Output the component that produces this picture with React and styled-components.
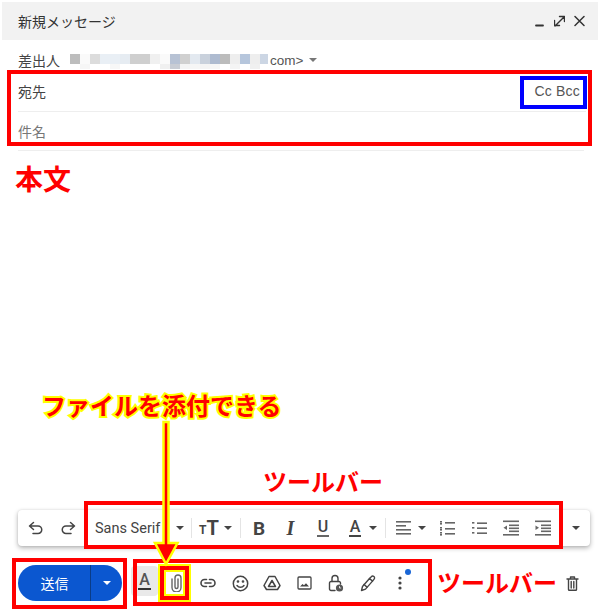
import React from "react";
import styled, { createGlobalStyle } from "styled-components";

const Global = createGlobalStyle`
  html, body { margin: 0; padding: 0; background: #fff; }
  body { font-family: "Liberation Sans", "Noto Sans CJK JP", sans-serif; }
  #root { width: 600px; height: 612px; overflow: hidden; }
`;

const Page = styled.div`
  position: relative;
  width: 600px;
  height: 612px;
  background: #fff;
  display: flex;
  flex-direction: column;
`;
const Header = styled.header`
  flex: none;
  height: 38px;
  margin: 2px 2px 0;
  padding: 0 13px 0 16px;
  background: #f2f2f2;
  display: flex;
  align-items: center;
  justify-content: space-between;
`;
const Title = styled.span`
  font-size: 14px;
  color: #333;
`;
const WindowIcons = styled.div`
  display: flex;
  align-items: center;
  gap: 9px;
`;
const FromRow = styled.div`
  flex: none;
  height: 31px;
  padding: 9px 0 0 18px;
  box-sizing: border-box;
  display: flex;
  align-items: center;
  font-size: 14px;
  color: #444;
`;
const FromLabel = styled.span`
  width: 52px;
`;
const FromMail = styled.span`
  margin-left: 2px;
  font-size: 13.5px;
  color: #555;
`;
const FromCaret = styled.span`
  margin-left: 6px;
  width: 0;
  height: 0;
  border-left: 4.5px solid transparent;
  border-right: 4.5px solid transparent;
  border-top: 4.5px solid #777;
`;
const Field = styled.div`
  flex: none;
  height: ${(p) => p.$h}px;
  margin: 0 ${(p) => p.$right}px 0 18px;
  box-sizing: border-box;
  border-bottom: 1px solid #eee;
  display: flex;
  align-items: center;
  justify-content: space-between;
  font-size: 14px;
  color: ${(p) => p.$color};
`;
const CcBcc = styled.span`
  margin-right: 6px;
  color: #555;
  letter-spacing: 0.2px;
`;
const Body = styled.div`
  flex: 1;
`;
const FormatBar = styled.div`
  flex: none;
  height: 36px;
  width: 572px;
  margin-left: 18px;
  border-radius: 4px;
  background: #fff;
  box-shadow: 0 2px 5px rgba(0, 0, 0, 0.3), 0 0 2px rgba(0, 0, 0, 0.1);
  display: flex;
  align-items: center;
`;
const Tool = styled.div`
  flex: none;
  width: ${(p) => p.$w}px;
  margin-left: ${(p) => p.$ml || 0}px;
  height: 100%;
  display: flex;
  align-items: center;
  justify-content: center;
  color: #444;
`;
const FontName = styled.div`
  flex: none;
  width: 88px;
  padding-left: 13px;
  box-sizing: border-box;
  font-family: Roboto, "Liberation Sans", sans-serif;
  font-size: 14.5px;
  color: #444;
  white-space: nowrap;
`;
const Caret = styled.span`
  width: 0;
  height: 0;
  border-left: 4px solid transparent;
  border-right: 4px solid transparent;
  border-top: 4px solid ${(p) => p.$color || "#444"};
`;
const Divider = styled.span`
  flex: none;
  width: 1px;
  height: 20px;
  margin-left: ${(p) => p.$ml}px;
  background: #e4e4e4;
`;
const SmallT = styled.span`
  font: 700 12px Roboto, sans-serif;
  align-self: flex-end;
  line-height: 15px;
`;
const BigT = styled.span`
  font: 700 20px Roboto, sans-serif;
  line-height: 20px;
`;
const TextGlyphs = styled.span`
  display: flex;
  align-items: flex-end;
  gap: 0;
  height: 20px;
`;
const Bold = styled.span`
  font: 700 19px Roboto, sans-serif;
`;
const Italic = styled.span`
  font: italic 700 20px "Liberation Serif", serif;
`;
const Under = styled.span`
  font: 500 16px/15px Roboto, sans-serif;
  padding: 0 1px 1px;
  border-bottom: 2px solid ${(p) => p.$line || "#666"};
`;
const BottomRow = styled.div`
  flex: none;
  height: 36px;
  margin-top: 19px;
  margin-bottom: 11px;
  padding: 0 12px 0 18px;
  display: flex;
  align-items: center;
`;
const Send = styled.div`
  flex: none;
  width: 104px;
  height: 36px;
  border-radius: 18px;
  background: #0b57d0;
  color: #fff;
  display: flex;
  align-items: center;
  font-size: 14px;
  overflow: hidden;
`;
const SendLabel = styled.span`
  width: 72px;
  text-align: center;
  padding-left: 1px;
  box-sizing: border-box;
`;
const SendMenu = styled.span`
  flex: 1;
  height: 100%;
  border-left: 1px solid #0a3c86;
  display: flex;
  align-items: center;
  justify-content: center;
`;
const ColorTile = styled.div`
  flex: none;
  width: 27px;
  height: 30px;
  margin: -5px 0 0 9px;
  border-radius: 4px;
  background: #e9e9e9;
  display: flex;
  align-items: center;
  justify-content: center;
  color: #555;
`;
const IconSlot = styled.div`
  position: relative;
  flex: none;
  width: 32px;
  height: 36px;
  margin-left: ${(p) => p.$ml || 0}px;
  display: flex;
  align-items: center;
  justify-content: center;
`;
const NoticeDot = styled.span`
  position: absolute;
  left: 21px;
  top: 4px;
  width: 6px;
  height: 6px;
  border-radius: 50%;
  background: #1a66d6;
`;
const Spacer = styled.div`
  flex: 1;
`;
const Frame = styled.div`
  position: absolute;
  left: ${(p) => p.$x}px;
  top: ${(p) => p.$y}px;
  width: ${(p) => p.$w}px;
  height: ${(p) => p.$h}px;
  box-sizing: border-box;
  border: ${(p) => p.$t || 4}px solid ${(p) => p.$color || "#f00"};
  pointer-events: none;
`;
const ClipFrame = styled(Frame)`
  box-shadow: 0 0 0 2px #ff0, inset 0 0 0 2px #ff0;
`;
const Note = styled.span`
  position: absolute;
  left: ${(p) => p.$x}px;
  top: ${(p) => p.$y}px;
  font-family: "Noto Sans CJK JP", sans-serif;
  font-size: ${(p) => p.$size}px;
  line-height: 1;
  font-weight: 700;
  color: #f00;
  white-space: nowrap;
  letter-spacing: ${(p) => p.$ls || 0}px;
`;
const CalloutNote = styled(Note)`
  -webkit-text-stroke: 4px #ff0;
  paint-order: stroke fill;
`;
const ArrowSvg = styled.svg`
  position: absolute;
  left: 150px;
  top: 418px;
`;

const S = ({ w, h, vw, vh, children, c = "#444", sw = 1.5, fill = "none" }) => (
  <svg
    width={w}
    height={h}
    viewBox={`0 0 ${vw || w} ${vh || h}`}
    fill={fill}
    stroke={c}
    strokeWidth={sw}
    strokeLinecap="round"
    strokeLinejoin="round"
  >
    {children}
  </svg>
);

const mosaicTop = ["#bdbdbd","#fafafa","#dcdcdc","#e9eff5","#e9eff5","#e6ecf2","#cfcfcf","#cfcfcf","#f0f0f0","#fafafa","#b7c2d4","#d0d0d0","#e3e9f0","#c9d1dc","#aebbd0","#bcbcbc","#eeeeee","#b6c6dc","#eeeeee","#ccd6e4"];
const mosaicBottom = ["#fff","#f6f6f6","#fff","#fff","#f7f7f7","#fff","#fff","#fff","#fff","#f0f0f0","#c8ccd4","#f4f4f4","#f6f6f6","#f4f4f4","#f6f6f6","#fff","#f4f4f4","#fff","#f0f0f0","#fff"];
const Mosaic = () => (
  <svg width="198" height="17">
    {mosaicTop.map((c, i) => (
      <rect key={i} x={i * 10} y="2" width="10" height="10" fill={c} />
    ))}
    {mosaicBottom.map((c, i) => (
      <rect key={i} x={i * 10} y="12" width="10" height="5" fill={c} />
    ))}
  </svg>
);

const Lines = ({ rows }) => (
  <svg width="16" height="16" fill="#666">
    {rows.map(([x, y, w], i) => (
      <rect key={i} x={x} y={y} width={w} height="1.6" />
    ))}
  </svg>
);

export default function App() {
  return (
    <Page>
      <Global />
      <Header>
        <Title>新規メッセージ</Title>
        <WindowIcons>
          <S w={10} h={12} c="#333" sw={1.8}><path d="M1 10.5h7" /></S>
          <S w={11} h={12} c="#333" sw={1.4}>
            <path d="M1 11 10 2M5.5 1.5h5v5M5.5 10.5h-5v-5" />
          </S>
          <S w={11} h={12} c="#333" sw={1.5}><path d="M1 1.5l9 9M10 1.5l-9 9" /></S>
        </WindowIcons>
      </Header>
      <FromRow>
        <FromLabel>差出人</FromLabel>
        <Mosaic />
        <FromMail>com&gt;</FromMail>
        <FromCaret />
      </FromRow>
      <Field $h={41} $right={14} $color="#444">
        <span>宛先</span>
        <CcBcc>Cc Bcc</CcBcc>
      </Field>
      <Field $h={39} $right={16} $color="#777">
        <span>件名</span>
      </Field>
      <Body />
      <FormatBar>
        <Tool $w={36}>
          <S w={16} h={14}><path d="M5.5 1.5 1.5 5l4 3.5M1.5 5H10a3.5 3.5 0 0 1 0 7.5H5" /></S>
        </Tool>
        <Tool $w={28}>
          <S w={16} h={14}><path d="M10.5 1.5l4 3.5-4 3.5M14.5 5H6a3.5 3.5 0 0 0 0 7.5h5" /></S>
        </Tool>
        <FontName>Sans Serif</FontName>
        <Tool $w={20}><Caret /></Tool>
        <Divider $ml={1} />
        <Tool $w={26} $ml={4}>
          <TextGlyphs><SmallT>T</SmallT><BigT>T</BigT></TextGlyphs>
        </Tool>
        <Tool $w={12}><Caret /></Tool>
        <Divider $ml={6} />
        <Tool $w={36}><Bold>B</Bold></Tool>
        <Tool $w={27}><Italic>I</Italic></Tool>
        <Tool $w={38}><Under>U</Under></Tool>
        <Tool $w={26}><Under $line="#444">A</Under></Tool>
        <Tool $w={10}><Caret /></Tool>
        <Divider $ml={7} />
        <Tool $w={29} $ml={3}>
          <Lines rows={[[0,1,15],[0,5,10],[0,9,15],[0,13,15]]} />
        </Tool>
        <Tool $w={8}><Caret /></Tool>
        <Tool $w={43}>
          <Lines rows={[[0,1,2],[0,3,2],[0,7,2],[0,9,2],[0,12,2],[0,14,2],[5,2,10],[5,8,10],[5,13,10]]} />
        </Tool>
        <Tool $w={21}>
          <Lines rows={[[0,2,2.4],[0,7,2.4],[0,12,2.4],[5,2.4,10],[5,7.4,10],[5,12.4,10]]} />
        </Tool>
        <Tool $w={42}>
          <svg width="16" height="16" fill="#666">
            <rect y="0.5" width="16" height="1.6" />
            <rect x="6" y="4.5" width="10" height="1.6" />
            <rect x="6" y="7.5" width="10" height="1.6" />
            <rect x="6" y="10.5" width="10" height="1.6" />
            <rect y="14" width="16" height="1.6" />
            <path d="M4 5.5v4.5L0.5 7.8z" />
          </svg>
        </Tool>
        <Tool $w={22}>
          <svg width="16" height="16" fill="#666">
            <rect y="0.5" width="16" height="1.6" />
            <rect x="6" y="4.5" width="10" height="1.6" />
            <rect x="6" y="7.5" width="10" height="1.6" />
            <rect x="6" y="10.5" width="10" height="1.6" />
            <rect y="14" width="16" height="1.6" />
            <path d="M0.5 5.5v4.5L4 7.8z" />
          </svg>
        </Tool>
        <Spacer />
        <Tool $w={28}><Caret /></Tool>
      </FormatBar>
      <BottomRow>
        <Send>
          <SendLabel>送信</SendLabel>
          <SendMenu><Caret $color="#fff" /></SendMenu>
        </Send>
        <ColorTile><Under $line="#333">A</Under></ColorTile>
        <IconSlot $ml={2}>
          <S w={13} h={18} c="#666" sw={1.4}>
            <path d="M2 5v8.5a4.5 4.5 0 0 0 9 0V4a3 3 0 0 0-6 0v9a1.5 1.5 0 0 0 3 0V5" />
          </S>
        </IconSlot>
        <IconSlot>
          <S w={16} h={10} sw={1.6}>
            <path d="M6.5 1.5H4.5a3.5 3.5 0 0 0 0 7h2M9.5 1.5h2a3.5 3.5 0 0 1 0 7h-2M5 5h6" />
          </S>
        </IconSlot>
        <IconSlot>
          <S w={17} h={17} sw={1.5}>
            <circle cx="8.5" cy="8.5" r="7.2" />
            <path d="M5 10.5c1.8 2.4 5.2 2.4 7 0" />
            <circle cx="6" cy="6.5" r="0.6" />
            <circle cx="11" cy="6.5" r="0.6" />
          </S>
        </IconSlot>
        <IconSlot>
          <S w={18} h={16} sw={1.5}>
            <path d="M6 1.5h6l5 9-2.5 4h-11L1 10.5z" />
            <path d="M9 5.5l3.5 6h-7z" />
          </S>
        </IconSlot>
        <IconSlot>
          <S w={15} h={14} sw={1.3}>
            <rect x="1" y="1" width="13" height="12" rx="1" />
            <path d="M3 10.5l2.5-2.5 1.5 1.3 2-2 3 3.2z" fill="#444" stroke="none" />
          </S>
        </IconSlot>
        <IconSlot>
          <S w={16} h={19} sw={1.4}>
            <path d="M7 16.5H3a1.5 1.5 0 0 1-1.5-1.5V9A1.5 1.5 0 0 1 3 7.5h8A1.5 1.5 0 0 1 12.5 9v1" />
            <path d="M4 7.5V4.5a3 3 0 0 1 6 0v3" />
            <circle cx="11.5" cy="14" r="3.6" fill="#555" stroke="none" />
            <path d="M11.5 12.5V14h1.3" stroke="#fff" strokeWidth="0.8" />
          </S>
        </IconSlot>
        <IconSlot>
          <S w={16} h={17} sw={1.4}>
            <path d="M1.5 15.5l1-4 7-8 3 2.6-7 8z" />
            <path d="M9.5 3.5l1.8-1.8a1.6 1.6 0 0 1 2.8 2.4l-1.6 2M4 9.5l3 2.6" />
          </S>
        </IconSlot>
        <IconSlot>
          <svg width="4" height="14" fill="#444">
            <circle cx="2" cy="2" r="1.6" />
            <circle cx="2" cy="7" r="1.6" />
            <circle cx="2" cy="12" r="1.6" />
          </svg>
          <NoticeDot />
        </IconSlot>
        <Spacer />
        <IconSlot>
          <S w={13} h={15} sw={1.4}>
            <path d="M1 3h11M4.5 2.5V1h4v1.5M2.5 3v10.5a.8.8 0 0 0 .8.8h6.4a.8.8 0 0 0 .8-.8V3M5.2 5.5v6.5M7.8 5.5v6.5" />
          </S>
        </IconSlot>
      </BottomRow>

      <Frame $x={7} $y={70} $w={585} $h={76} />
      <Frame $x={520} $y={76} $w={67} $h={33} $color="#00f" />
      <Note $x={15} $y={164} $size={28}>本文</Note>
      <Note $x={263} $y={469} $size={24}>ツールバー</Note>
      <Frame $x={84} $y={501} $w={479} $h={48} />
      <Frame $x={12} $y={558} $w={115} $h={51} />
      <Frame $x={133} $y={559} $w={299} $h={47} />
      <Note $x={437} $y={570} $size={24}>ツールバー</Note>
      <ClipFrame $x={160} $y={566} $w={29} $h={34} />
      <ArrowSvg width="34" height="150" viewBox="0 0 34 150">
        <path
          d="M13.5 4h5v121h9L16 146 5 125h8.500z"
          fill="#f00"
          stroke="#ff0"
          strokeWidth="2.500"
        />
      </ArrowSvg>
      <CalloutNote $x={42} $y={393} $size={24}>ファイルを添付できる</CalloutNote>
    </Page>
  );
}
